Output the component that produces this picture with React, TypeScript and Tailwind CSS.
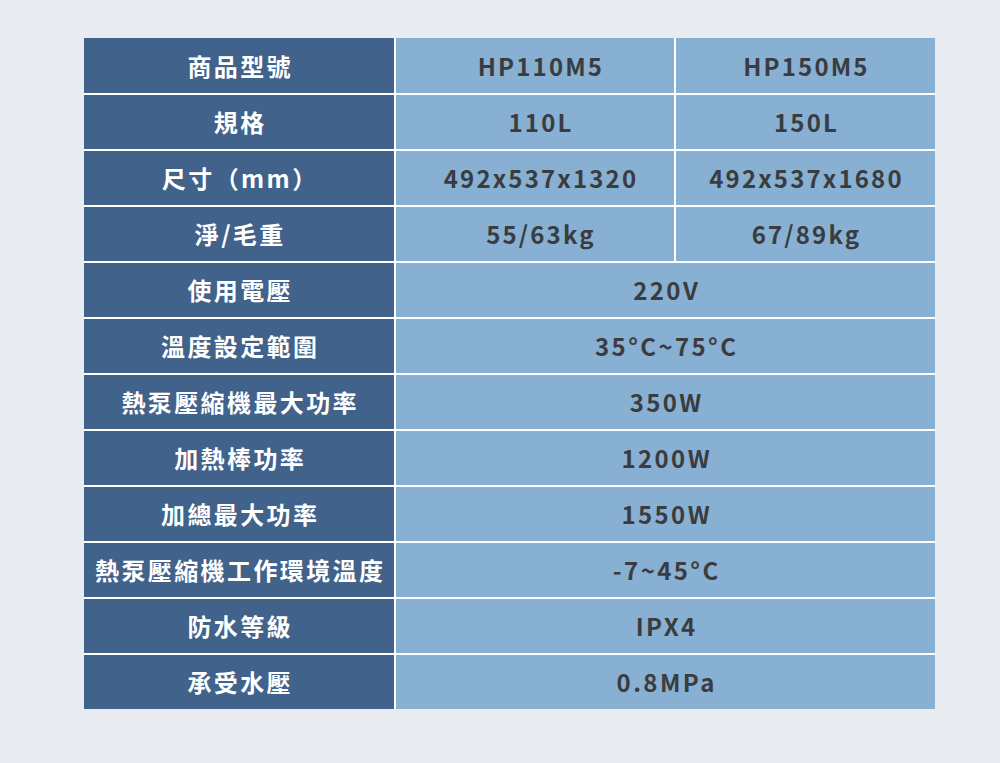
import React from "react";

type Row = {
  label: string;
  values: string[];
};

const rows: Row[] = [
  { label: "商品型號", values: ["HP110M5", "HP150M5"] },
  { label: "規格", values: ["110L", "150L"] },
  { label: "尺寸（mm）", values: ["492x537x1320", "492x537x1680"] },
  { label: "淨/毛重", values: ["55/63kg", "67/89kg"] },
  { label: "使用電壓", values: ["220V"] },
  { label: "溫度設定範圍", values: ["35°C~75°C"] },
  { label: "熱泵壓縮機最大功率", values: ["350W"] },
  { label: "加熱棒功率", values: ["1200W"] },
  { label: "加總最大功率", values: ["1550W"] },
  { label: "熱泵壓縮機工作環境溫度", values: ["-7~45°C"] },
  { label: "防水等級", values: ["IPX4"] },
  { label: "承受水壓", values: ["0.8MPa"] },
];

const font = { fontFamily: '"Noto Sans CJK TC", "Noto Sans", sans-serif' };

export default function App() {
  return (
    <div className="min-h-[763px] w-full bg-[#e8ecf1] pt-[38px]" style={font}>
      <div className="ml-[84px] grid w-[851px] grid-cols-[310px_278px_259px] grid-rows-[55px_repeat(11,54px)] gap-[2px] bg-white">
        {rows.map((row) => (
          <React.Fragment key={row.label}>
            <div className="flex items-center justify-center bg-[#41628a]">
              <span className="whitespace-nowrap pl-[2.4px] text-[24px] font-bold tracking-[0.1em] text-white">
                {row.label}
              </span>
            </div>
            {row.values.length === 2 ? (
              row.values.map((v, i) => (
                <div
                  key={v}
                  className={
                    i === 0
                      ? "flex items-center justify-center bg-[#87b0d2] pl-[10px]"
                      : "flex items-center justify-center bg-[#87b0d2]"
                  }
                >
                  <span className="pl-[2px] text-[24px] font-bold tracking-[0.09em] text-[#3a3c40]">{v}</span>
                </div>
              ))
            ) : (
              <div className="col-span-2 flex items-center justify-center bg-[#87b0d2]">
                <span className="pl-[2.4px] text-[24px] font-bold tracking-[0.1em] text-[#3a3c40]">{row.values[0]}</span>
              </div>
            )}
          </React.Fragment>
        ))}
      </div>
    </div>
  );
}
